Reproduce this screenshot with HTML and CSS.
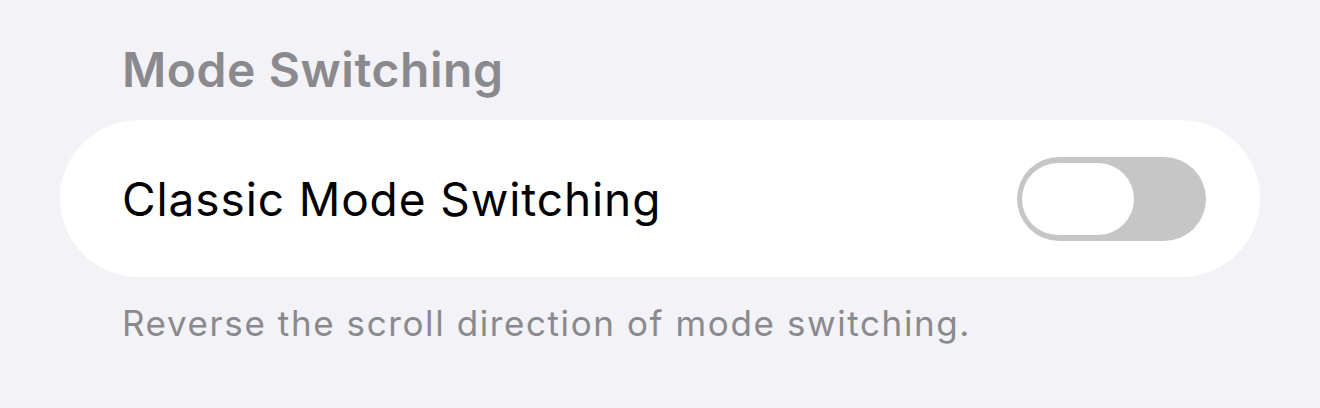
FILE: index.html
```html
<!DOCTYPE html>
<html>
<head>
<meta charset="utf-8">
<link rel="stylesheet" href="styles.css">
</head>
<body>
<div class="page">
  <div class="section-title">Mode Switching</div>
  <div class="card">
    <div class="row-label">Classic Mode Switching</div>
    <div class="toggle"><div class="knob"></div></div>
  </div>
  <div class="footer">Reverse the scroll direction of mode switching.</div>
</div>
</body>
</html>
```
FILE: styles.css
```css
html, body {
  margin: 0;
  padding: 0;
  background: #f2f2f7;
}
.page {
  width: 1320px;
  height: 408px;
  padding: 0 60px;
  box-sizing: border-box;
  font-family: Inter, "Noto Sans", sans-serif;
}
.section-title {
  padding: 42px 0 0 62px;
  height: 120px;
  box-sizing: border-box;
  font-size: 48px;
  line-height: 56px;
  font-weight: 600;
  letter-spacing: 0.55px;
  color: #8a8a8e;
}
.card {
  height: 157px;
  background: #ffffff;
  border-radius: 79px;
  display: flex;
  align-items: center;
  justify-content: space-between;
  padding: 0 54px 0 62px;
}
.row-label {
  font-size: 46px;
  letter-spacing: 0.9px;
  color: #000;
  line-height: 56px;
}
.toggle {
  width: 189px;
  height: 84px;
  border-radius: 42px;
  background: #c6c6c6;
  padding: 6px 5px;
  box-sizing: border-box;
  display: flex;
}
.knob {
  width: 112px;
  height: 72px;
  border-radius: 36px;
  background: #fff;
}
.footer {
  padding: 24px 0 0 62px;
  font-size: 35px;
  letter-spacing: 1.6px;
  line-height: 44px;
  color: #8a8a8e;
}
```
